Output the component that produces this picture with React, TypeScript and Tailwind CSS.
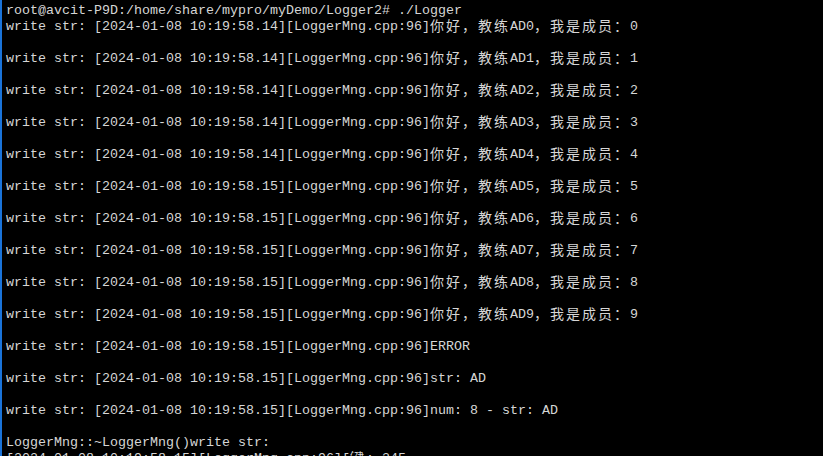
import React from "react";

const isWide = (ch: string) => {
  const c = ch.codePointAt(0) || 0;
  return c >= 0x2e80;
};

function Line({ text }: { text: string }) {
  const parts: React.ReactNode[] = [];
  let buf = "";
  let k = 0;
  for (const ch of Array.from(text)) {
    if (isWide(ch)) {
      if (buf) {
        parts.push(<span key={k++}>{buf}</span>);
        buf = "";
      }
      parts.push(
        <span
          key={k++}
          className="inline-block h-[16px] w-[16px] text-left align-top text-[14px] leading-[12px]"
          style={{ fontFamily: '"Noto Sans CJK SC", sans-serif' }}
        >
          {ch}
        </span>
      );
    } else {
      buf += ch;
    }
  }
  if (buf) parts.push(<span key={k++}>{buf}</span>);
  return <div className="h-[16px] whitespace-pre leading-[16px]">{parts.length ? parts : " "}</div>;
}

export default function App() {
  const pre = (ts: string) => `write str: [2024-01-08 10:19:58.${ts}][LoggerMng.cpp:96]`;
  const lines: string[] = ["root@avcit-P9D:/home/share/mypro/myDemo/Logger2# ./Logger"];
  for (let i = 0; i < 10; i++) {
    lines.push(pre(i < 5 ? "14" : "15") + `你好，教练AD${i}，我是成员：${i}`);
    lines.push("");
  }
  lines.push(pre("15") + "ERROR");
  lines.push("");
  lines.push(pre("15") + "str: AD");
  lines.push("");
  lines.push(pre("15") + "num: 8 - str: AD");
  lines.push("");
  lines.push("LoggerMng::~LoggerMng()write str:");
  lines.push("[2024-01-08 10:19:58.15][LoggerMng.cpp:96][键: 345");
  return (
    <div className="h-[456px] w-[823px] overflow-hidden bg-black">
      <div
        className="h-full border-l-2 border-[#1a73d9] pl-[4px] pt-[3px] text-[13.333px] text-[#d6d6d6]"
        style={{ fontFamily: '"Liberation Mono", monospace' }}
      >
        {lines.map((l, i) => (
          <Line key={i} text={l} />
        ))}
      </div>
    </div>
  );
}
